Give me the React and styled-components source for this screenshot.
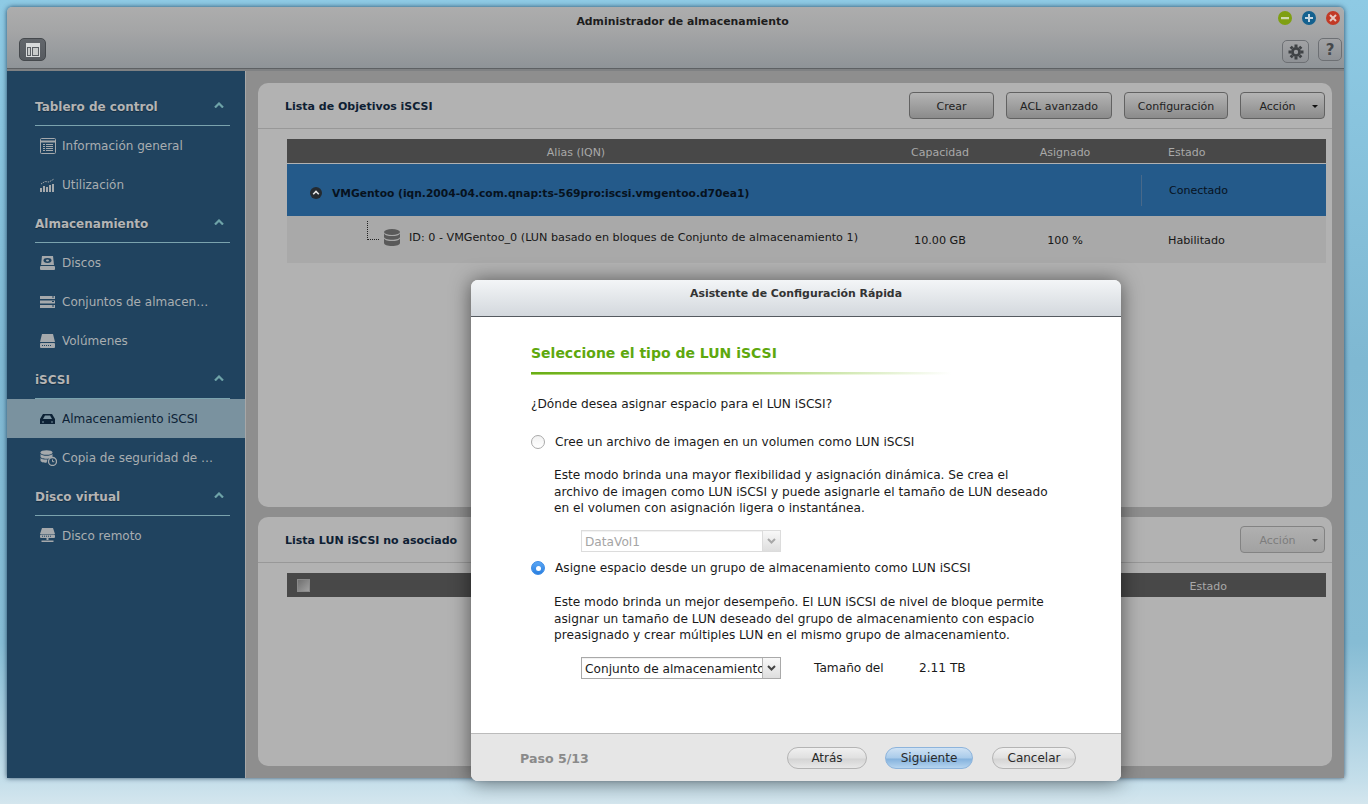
import React from 'react'
import styled, { createGlobalStyle } from 'styled-components'

const GlobalStyle = createGlobalStyle`
  html, body {
    margin: 0;
    height: 804px;
    overflow: hidden;
  }
  body {
    font-family: "DejaVu Sans", Verdana, sans-serif;
    font-size: 11px;
    background: linear-gradient(180deg, #8ecae4 0%, #7fb8d2 45%, #86bcd4 80%, #c4deea 97%, #d4e6ee 100%);
  }
`

const Page = styled.div`
  position: relative;
  width: 1368px;
  height: 804px;
  padding: 7px 24px 26px 7px;
  box-sizing: border-box;
`

const Window = styled.div`
  height: 771px;
  display: flex;
  flex-direction: column;
  border-radius: 5px 5px 0 0;
  overflow: hidden;
  box-shadow: 0 0 5px rgba(0, 30, 60, 0.75);
`

const TitleBar = styled.header`
  height: 61px;
  flex: none;
  position: relative;
  background: linear-gradient(180deg, #adadad 0%, #a4a5a6 40%, #8f9498 100%);
  border-bottom: 1px solid #5e6164;
`

const Title = styled.h1`
  margin: 0;
  padding: 8px 0 0 14px;
  text-align: center;
  font-size: 10.9px;
  line-height: 13px;
  font-weight: bold;
  color: #1d1d1d;
`

const TitleRow = styled.div`
  display: flex;
  justify-content: space-between;
  align-items: flex-start;
  padding: 10px 2px 0 12px;
`

const RightTools = styled.div`
  display: flex;
  align-items: flex-start;
  gap: 9px;
`

const ToolButton = styled.div`
  width: ${props => props.$w}px;
  height: ${props => props.$h}px;
  margin-top: ${props => props.$top || 0}px;
  display: flex;
  align-items: center;
  justify-content: center;
  box-sizing: border-box;
  border: 1px solid ${props => (props.$dark ? '#45494d' : '#6d7074')};
  border-radius: 5px;
  background: ${props => (props.$dark
    ? 'linear-gradient(180deg, #62666b, #575b60)'
    : 'linear-gradient(180deg, #a2a3a5, #8e9195)')};
  color: #45484b;
  font-size: 15px;
  font-weight: bold;
`

const Lights = styled.div`
  position: absolute;
  top: 4px;
  right: 4px;
  display: flex;
  gap: 10px;
`

const Light = styled.div`
  width: 14px;
  height: 14px;
  border-radius: 50%;
  background: ${props => props.$color};
  display: flex;
  align-items: center;
  justify-content: center;
`

const Body = styled.div`
  flex: 1;
  display: flex;
  min-height: 0;
  border-top: 2px solid #7f8183;
`

const Sidebar = styled.nav`
  width: 238px;
  flex: none;
  padding-top: 16px;
  background: #20435f;
  border-right: 1px solid #a7a7a7;
`

const GroupHeader = styled.div`
  height: 39px;
  box-sizing: border-box;
  margin: 0 15px 0 28px;
  display: flex;
  align-items: center;
  justify-content: space-between;
  padding: 2px 6px 0 0;
  border-bottom: 1px solid #7ba3ae;
  color: #b4b4b4;
  font-size: 12px;
  font-weight: bold;
  text-shadow: 0 1px 1px rgba(0, 0, 0, 0.35);

  svg {
    margin-bottom: 5px;
  }
`

const Item = styled.div`
  height: 39px;
  display: flex;
  align-items: center;
  padding-left: 33px;
  background: ${props => (props.$active ? '#7a929f' : 'transparent')};
  color: ${props => (props.$active ? '#0d2236' : '#a9aeb1')};
  font-size: 12px;
`

const ItemIcon = styled.span`
  width: 22px;
  flex: none;
  display: flex;
  color: ${props => (props.$active ? '#0d2236' : '#a5a9ac')};
`

const ItemLabel = styled.span`
  width: 152px;
  overflow: hidden;
  white-space: nowrap;
  text-overflow: ellipsis;
`

const Content = styled.main`
  flex: 1;
  display: flex;
  flex-direction: column;
  gap: 10px;
  padding: 12px 12px 12px 12px;
  background: #8e8e8e;
`

const Panel = styled.section`
  height: ${props => props.$h}px;
  box-sizing: border-box;
  background: #b2b2b2;
  border-radius: 10px;
`

const PanelHead = styled.div`
  height: 46px;
  box-sizing: border-box;
  display: flex;
  align-items: center;
  justify-content: space-between;
  padding: 0 7px 0 27px;
  border-bottom: 1px solid #989898;
`

const PanelTitle = styled.h2`
  margin: 0;
  padding-top: 1px;
  font-size: 11px;
  font-weight: bold;
  color: #0e2033;
`

const Buttons = styled.div`
  display: flex;
  gap: 12px;
`

const ActionButton = styled.div`
  width: ${props => props.$w}px;
  height: 27px;
  box-sizing: border-box;
  display: flex;
  align-items: center;
  justify-content: center;
  position: relative;
  padding: 1px ${props => (props.$menu ? 10 : 0)}px 0 0;
  border: 1px solid ${props => (props.$off ? '#838383' : '#626262')};
  border-radius: 4px;
  background: ${props => (props.$off
    ? 'linear-gradient(180deg, #b0b0b0, #a2a2a2)'
    : 'linear-gradient(180deg, #b4b4b4, #8b8b8b)')};
  color: ${props => (props.$off ? '#7d7d7d' : '#222')};
  font-size: 11px;
`

const Caret = styled.span`
  position: absolute;
  right: 6px;
  top: 12px;
  border-left: 3px solid transparent;
  border-right: 3px solid transparent;
  border-top: 3px solid ${props => (props.$off ? '#555' : '#111')};
`

const TableWrap = styled.div`
  margin: 10px 6px 0 29px;
`

const TableHead = styled.div`
  height: 24px;
  padding-top: 2px;
  box-sizing: border-box;
  display: grid;
  grid-template-columns: 578px 150px 100px 1fr;
  align-items: center;
  background: #484848;
  color: #a9a9a9;
  font-size: 11px;
  text-align: center;
`

const EstadoCell = styled.div`
  text-align: left;
  padding-left: 53px;
`

const TargetRow = styled.div`
  height: 52px;
  margin-top: 1px;
  display: grid;
  grid-template-columns: 578px 150px 100px 1fr;
  align-items: center;
  background: #245a8a;
  color: #07121e;
  font-size: 11px;
`

const TargetName = styled.div`
  display: flex;
  align-items: center;
  gap: 10px;
  padding: 6px 0 0 23px;
  font-size: 10.7px;
  font-weight: bold;
  white-space: nowrap;
`

const TargetEstado = styled.div`
  grid-column: 4;
  height: 31px;
  display: flex;
  align-items: center;
  margin-left: 26px;
  padding-left: 27px;
  border-left: 1px solid #48698a;
`

const LunRow = styled.div`
  height: 47px;
  display: grid;
  grid-template-columns: 578px 150px 100px 1fr;
  align-items: center;
  background: #a9a9a9;
  color: #171717;
  font-size: 11.2px;
  text-align: center;
`

const LunName = styled.div`
  display: flex;
  align-items: center;
  padding: 0 0 4px 80px;
  text-align: left;
  white-space: nowrap;
`

const LunLabel = styled.span`
  margin-left: 9px;
`

const Connector = styled.span`
  width: 11px;
  height: 18px;
  margin-top: -14px;
  margin-right: 5px;
  flex: none;
  border-left: 1px dotted #222;
  border-bottom: 1px dotted #222;
`

const CellValue = styled.div`
  padding-top: 1px;
`

const HeadCheck = styled.span`
  display: block;
  width: 11px;
  height: 11px;
  margin: -2px 0 0 10px;
  border: 1px solid #8a8a8a;
  background: linear-gradient(135deg, #707070, #a0a0a0);
`

const BottomHead = styled(TableHead)`
  display: flex;
  justify-content: space-between;
`

const BottomEstado = styled.span`
  padding-right: 99px;
`

const Dialog = styled.div`
  position: absolute;
  left: 471px;
  top: 280px;
  width: 650px;
  height: 501px;
  display: flex;
  flex-direction: column;
  border-radius: 7px;
  overflow: hidden;
  background: #fff;
  box-shadow: 0 1px 20px rgba(0, 0, 0, 0.55);
`

const DialogHead = styled.div`
  height: 37px;
  flex: none;
  padding-top: 7px;
  box-sizing: border-box;
  text-align: center;
  font-size: 10.9px;
  line-height: 13px;
  font-weight: bold;
  color: #333;
  background: linear-gradient(180deg, #f3f5f7 0%, #d3d8dd 100%);
  border-bottom: 1px solid #555a60;
`

const DialogBody = styled.div`
  flex: 1;
  padding: 27px 60px 0 60px;
  color: #1a1a1a;
  font-size: 12.17px;
`

const StepTitle = styled.h3`
  margin: 0;
  font-size: 14px;
  line-height: 18px;
  font-weight: bold;
  color: #5ea80e;
`

const StepRule = styled.div`
  width: 420px;
  height: 3px;
  margin-top: 10px;
  background:
    linear-gradient(90deg, #68ad14 0%, #a6d36a 50%, rgba(255, 255, 255, 0) 100%) top / 100% 2px no-repeat,
    linear-gradient(90deg, #a9d468 0%, #d8ecb4 50%, rgba(255, 255, 255, 0) 100%) bottom / 100% 1px no-repeat;
`

const Question = styled.p`
  margin: 21px 0 0;
  line-height: 16px;
`

const RadioRow = styled.div`
  height: 20px;
  margin-top: ${props => props.$top}px;
  display: flex;
  align-items: center;
  gap: 10px;
`

const Radio = styled.span`
  width: 14px;
  height: 14px;
  box-sizing: border-box;
  border-radius: 50%;
  flex: none;
  display: flex;
  align-items: center;
  justify-content: center;
  border: 1px solid ${props => (props.$on ? '#3a8be6' : '#aaa')};
  background: ${props => (props.$on
    ? 'linear-gradient(180deg, #5aa6f4, #2a7fe0)'
    : 'linear-gradient(180deg, #f2f2f2, #fff)')};

  &::after {
    content: '';
    width: 5px;
    height: 5px;
    border-radius: 50%;
    background: ${props => (props.$on ? '#fff' : 'transparent')};
  }
`

const Description = styled.p`
  margin: ${props => props.$top}px 0 0 23px;
  line-height: 16.5px;
  width: 495px;
`

const SelectRow = styled.div`
  margin: ${props => props.$top}px 0 0 50px;
  display: flex;
  align-items: center;
`

const Select = styled.div`
  width: 200px;
  height: 22px;
  box-sizing: border-box;
  display: flex;
  align-items: center;
  border: 1px solid ${props => (props.$off ? '#dcdcdc' : '#a9a9a9')};
  color: ${props => (props.$off ? '#a5a5a5' : '#1a1a1a')};
  box-shadow: inset 0 1px 1px rgba(0, 0, 0, 0.06);
`

const SelectText = styled.span`
  flex: 1;
  padding: 1px 0 0 3px;
  overflow: hidden;
  white-space: nowrap;
`

const SelectArrow = styled.span`
  width: 17px;
  height: 20px;
  flex: none;
  display: flex;
  align-items: center;
  justify-content: center;
  border-left: 1px solid ${props => (props.$off ? '#dcdcdc' : '#b5b5b5')};
  background: linear-gradient(180deg, #f8f8f8, #dedede);
  color: ${props => (props.$off ? '#a8a8a8' : '#444')};
`

const PoolSize = styled.span`
  margin-left: 33px;
  width: 105px;
`

const Footer = styled.div`
  height: 47px;
  flex: none;
  display: flex;
  align-items: center;
  padding: 0 45px 0 49px;
  background: #e6e6e6;
  border-top: 1px solid #bbb;
`

const StepCount = styled.span`
  flex: 1;
  padding-top: 1px;
  font-size: 12.6px;
  font-weight: bold;
  color: #8a8a8a;
`

const PillButton = styled.div`
  width: ${props => props.$w}px;
  height: 22px;
  margin-left: ${props => props.$left}px;
  padding-top: 1px;
  box-sizing: border-box;
  display: flex;
  align-items: center;
  justify-content: center;
  border-radius: 11px;
  border: 1px solid ${props => (props.$primary ? '#8db4dc' : '#b4b4b4')};
  background: ${props => (props.$primary
    ? 'linear-gradient(180deg, #cfe2f4 0%, #a9cbea 50%, #84b2dd 55%, #b5d4ef 100%)'
    : 'linear-gradient(180deg, #f0f0f0 0%, #e0e0e0 50%, #d4d4d4 55%, #e8e8e8 100%)')};
  color: #2a2a2a;
  font-size: 12px;
`

function Chevron() {
  return (
    <svg width="10" height="6" viewBox="0 0 10 6" fill="none" stroke="#6ea3a8" strokeWidth="2.2">
      <path d="M1 5.5 L5 1.5 L9 5.5" />
    </svg>
  )
}

function ListIcon() {
  return (
    <svg width="16" height="16" viewBox="0 0 16 16" fill="none" stroke="currentColor">
      <rect x="0.5" y="0.5" width="15" height="15" rx="1" />
      <path d="M1 3.5 H15" strokeWidth="2" />
      <path d="M3 6.5 H5 M6 6.5 H13 M3 8.5 H5 M6 8.5 H13 M3 10.5 H5 M6 10.5 H13 M3 12.5 H5 M6 12.5 H13" />
    </svg>
  )
}

function UsageIcon() {
  return (
    <svg width="15" height="14" viewBox="0 0 15 14" fill="currentColor">
      <path d="M0 10h2v4H0zM3 8h2v6H3zM6 9h2v5H6zM9 7h2v7H9zM12 6h2v8h-2z" />
      <path d="M1 6 L5 3.5 L9 4 L14 1" fill="none" stroke="currentColor" strokeDasharray="1.5 1" />
    </svg>
  )
}

function DiskIcon() {
  return (
    <svg width="15" height="14" viewBox="0 0 15 14" fill="currentColor">
      <path d="M2 0h11l1 9H1z" />
      <rect x="0" y="10" width="15" height="4" rx="1" />
      <ellipse cx="7.5" cy="4.5" rx="4" ry="2.4" fill="#20435f" />
      <ellipse cx="7.5" cy="4.5" rx="1.5" ry="1" />
    </svg>
  )
}

function StackIcon() {
  return (
    <svg width="15" height="12" viewBox="0 0 15 12" fill="currentColor">
      <path d="M0 0h15v3H0zM0 4.5h15v3H0zM0 9h15v3H0z" />
      <path d="M12 1h2M12 5.5h2M12 10h2" stroke="#20435f" />
    </svg>
  )
}

function VolumeIcon() {
  return (
    <svg width="15" height="14" viewBox="0 0 15 14" fill="currentColor">
      <path d="M2 0h11l2 8H0z" />
      <rect x="0" y="9" width="15" height="5" rx="1" />
      <path d="M2 11.5h9" stroke="#20435f" strokeDasharray="1 1" />
    </svg>
  )
}

function TargetIcon() {
  return (
    <svg width="15" height="12" viewBox="0 0 15 12">
      <path d="M3 1h9l3 5v5H0V6z" fill="currentColor" />
      <path d="M3 6 L5 2.5 H10 L12 6 Z" fill="#7a929f" />
      <path d="M2 9h2M11 9h2" stroke="#7a929f" />
    </svg>
  )
}

function BackupIcon() {
  return (
    <svg width="17" height="16" viewBox="0 0 17 16" fill="currentColor">
      <ellipse cx="6.5" cy="2.5" rx="6" ry="2.3" />
      <path d="M0.5 4v2.5c0 1.3 2.7 2.3 6 2.3s6-1 6-2.3V4c-1 1.2-3.4 1.8-6 1.8S1.500 5.200 0.5 4z" />
      <path d="M0.500 8v2.500c0 1.300 2.700 2.300 6 2.300l1-3.300c-3 .2-6-.3-7-1.500z" />
      <circle cx="12.500" cy="11.500" r="4" fill="#20435f" stroke="currentColor" strokeWidth="1.300" />
      <path d="M12.500 9.500v2.200h1.800" fill="none" stroke="currentColor" />
    </svg>
  )
}

function RemoteIcon() {
  return (
    <svg width="15" height="15" viewBox="0 0 15 15" fill="currentColor">
      <path d="M2 0h11l2 6H0z" />
      <rect x="0" y="6.500" width="15" height="3.500" rx="1" />
      <path d="M2 8.200h9" stroke="#20435f" strokeDasharray="1 1" />
      <path d="M6.500 10h2v2h-2zM1.500 12.500h12v1.500h-12z" />
    </svg>
  )
}

function LayoutIcon() {
  return (
    <svg width="14" height="14" viewBox="0 0 14 14">
      <rect x="0" y="0" width="14" height="14" fill="#d8dadb" />
      <rect x="1" y="4" width="4" height="9" fill="#5b5f64" />
      <rect x="6" y="4" width="7" height="9" fill="#5b5f64" />
      <rect x="2" y="5" width="2" height="7" fill="#c8caca" />
      <rect x="7" y="5" width="5" height="7" fill="#c8caca" />
    </svg>
  )
}

function GearIcon() {
  return (
    <svg width="16" height="16" viewBox="0 0 16 16" fill="none" stroke="#3f4245">
      <circle cx="8" cy="8" r="3.600" strokeWidth="2.800" />
      <path
        d="M8 0.500v2.500M8 13v2.500M0.500 8H3M13 8h2.500M2.700 2.700l1.800 1.800M11.500 11.500l1.800 1.800M13.300 2.700l-1.800 1.800M4.500 11.500l-1.800 1.800"
        strokeWidth="3"
      />
    </svg>
  )
}

function SelectChevron() {
  return (
    <svg width="9" height="6" viewBox="0 0 9 6" fill="none" stroke="currentColor" strokeWidth="2">
      <path d="M1 1 L4.500 4.500 L8 1" />
    </svg>
  )
}

function CollapseIcon() {
  return (
    <svg width="12" height="12" viewBox="0 0 12 12">
      <circle cx="6" cy="6" r="6" fill="#242a30" />
      <path d="M3.200 7.300 L6 4.500 L8.800 7.300" fill="none" stroke="#e4e4e4" strokeWidth="1.600" />
    </svg>
  )
}

function DatabaseIcon() {
  return (
    <svg width="16" height="17" viewBox="0 0 16 17" fill="#5a5a5a">
      <ellipse cx="8" cy="3" rx="8" ry="3" />
      <path d="M0 4.500c1 1.800 4 2.600 8 2.600s7-.8 8-2.600V8c0 1.500-3.500 2.700-8 2.700S0 9.500 0 8z" />
      <path d="M0 9.500c1 1.800 4 2.600 8 2.600s7-.8 8-2.600V14c0 1.700-3.500 3-8 3s-8-1.300-8-3z" />
    </svg>
  )
}

const menu = [
  {
    title: 'Tablero de control',
    items: [
      { label: 'Información general', Icon: ListIcon },
      { label: 'Utilización', Icon: UsageIcon },
    ],
  },
  {
    title: 'Almacenamiento',
    items: [
      { label: 'Discos', Icon: DiskIcon },
      { label: 'Conjuntos de almacenamiento', Icon: StackIcon },
      { label: 'Volúmenes', Icon: VolumeIcon },
    ],
  },
  {
    title: 'iSCSI',
    items: [
      { label: 'Almacenamiento iSCSI', Icon: TargetIcon, active: true },
      { label: 'Copia de seguridad de LUN', Icon: BackupIcon },
    ],
  },
  {
    title: 'Disco virtual',
    items: [{ label: 'Disco remoto', Icon: RemoteIcon }],
  },
]

export default function App() {
  return (
    <Page>
      <GlobalStyle />
      <Window>
        <TitleBar>
          <Title>Administrador de almacenamiento</Title>
          <Lights>
            <Light $color="#7f9f12">
              <svg width="8" height="8" viewBox="0 0 8 8"><path d="M0 3h8v2.200H0z" fill="#cfd8b0" /></svg>
            </Light>
            <Light $color="#14618f">
              <svg width="8" height="8" viewBox="0 0 8 8"><path d="M3 0h2v3h3v2H5v3H3V5H0V3h3z" fill="#c6d6e0" /></svg>
            </Light>
            <Light $color="#c23a26">
              <svg width="8" height="8" viewBox="0 0 8 8"><path d="M1 1l6 6M7 1l-6 6" stroke="#e6c8c0" strokeWidth="2" /></svg>
            </Light>
          </Lights>
          <TitleRow>
            <ToolButton $w={27} $h={23} $dark>
              <LayoutIcon />
            </ToolButton>
            <RightTools>
              <ToolButton $w={27} $h={23} $top={2}>
                <GearIcon />
              </ToolButton>
              <ToolButton $w={24} $h={23}>?</ToolButton>
            </RightTools>
          </TitleRow>
        </TitleBar>
        <Body>
          <Sidebar>
            {menu.map(group => (
              <div key={group.title}>
                <GroupHeader>
                  <span>{group.title}</span>
                  <Chevron />
                </GroupHeader>
                {group.items.map(({ label, Icon, active }) => (
                  <Item key={label} $active={active}>
                    <ItemIcon $active={active}><Icon /></ItemIcon>
                    <ItemLabel>{label}</ItemLabel>
                  </Item>
                ))}
              </div>
            ))}
          </Sidebar>
          <Content>
            <Panel $h={424}>
              <PanelHead>
                <PanelTitle>Lista de Objetivos iSCSI</PanelTitle>
                <Buttons>
                  <ActionButton $w={85}>Crear</ActionButton>
                  <ActionButton $w={106}>ACL avanzado</ActionButton>
                  <ActionButton $w={104}>Configuración</ActionButton>
                  <ActionButton $w={85} $menu>Acción<Caret /></ActionButton>
                </Buttons>
              </PanelHead>
              <TableWrap>
                <TableHead>
                  <div>Alias (IQN)</div>
                  <div>Capacidad</div>
                  <div>Asignado</div>
                  <EstadoCell>Estado</EstadoCell>
                </TableHead>
                <TargetRow>
                  <TargetName>
                    <CollapseIcon />
                    VMGentoo (iqn.2004-04.com.qnap:ts-569pro:iscsi.vmgentoo.d70ea1)
                  </TargetName>
                  <TargetEstado>Conectado</TargetEstado>
                </TargetRow>
                <LunRow>
                  <LunName>
                    <Connector />
                    <DatabaseIcon />
                    <LunLabel>ID: 0 - VMGentoo_0 (LUN basado en bloques de Conjunto de almacenamiento 1)</LunLabel>
                  </LunName>
                  <CellValue>10.00 GB</CellValue>
                  <CellValue>100 %</CellValue>
                  <EstadoCell><CellValue>Habilitado</CellValue></EstadoCell>
                </LunRow>
              </TableWrap>
            </Panel>
            <Panel $h={249}>
              <PanelHead>
                <PanelTitle>Lista LUN iSCSI no asociado</PanelTitle>
                <ActionButton $w={85} $off $menu>Acción<Caret $off /></ActionButton>
              </PanelHead>
              <TableWrap>
                <BottomHead>
                  <HeadCheck />
                  <BottomEstado>Estado</BottomEstado>
                </BottomHead>
              </TableWrap>
            </Panel>
          </Content>
        </Body>
      </Window>
      <Dialog>
        <DialogHead>Asistente de Configuración Rápida</DialogHead>
        <DialogBody>
          <StepTitle>Seleccione el tipo de LUN iSCSI</StepTitle>
          <StepRule />
          <Question>¿Dónde desea asignar espacio para el LUN iSCSI?</Question>
          <RadioRow $top={20}>
            <Radio />
            Cree un archivo de imagen en un volumen como LUN iSCSI
          </RadioRow>
          <Description $top={15}>
            Este modo brinda una mayor flexibilidad y asignación dinámica. Se crea el
            archivo de imagen como LUN iSCSI y puede asignarle el tamaño de LUN deseado
            en el volumen con asignación ligera o instantánea.
          </Description>
          <SelectRow $top={13.5}>
            <Select $off>
              <SelectText>DataVol1</SelectText>
              <SelectArrow $off><SelectChevron /></SelectArrow>
            </Select>
          </SelectRow>
          <RadioRow $top={6}>
            <Radio $on />
            Asigne espacio desde un grupo de almacenamiento como LUN iSCSI
          </RadioRow>
          <Description $top={16}>
            Este modo brinda un mejor desempeño. El LUN iSCSI de nivel de bloque permite
            asignar un tamaño de LUN deseado del grupo de almacenamiento con espacio
            preasignado y crear múltiples LUN en el mismo grupo de almacenamiento.
          </Description>
          <SelectRow $top={13.5}>
            <Select>
              <SelectText>Conjunto de almacenamiento 1</SelectText>
              <SelectArrow><SelectChevron /></SelectArrow>
            </Select>
            <PoolSize>Tamaño del</PoolSize>
            <span>2.11 TB</span>
          </SelectRow>
        </DialogBody>
        <Footer>
          <StepCount>Paso 5/13</StepCount>
          <PillButton $w={80}>Atrás</PillButton>
          <PillButton $w={88} $left={18} $primary>Siguiente</PillButton>
          <PillButton $w={84} $left={19}>Cancelar</PillButton>
        </Footer>
      </Dialog>
    </Page>
  )
}
